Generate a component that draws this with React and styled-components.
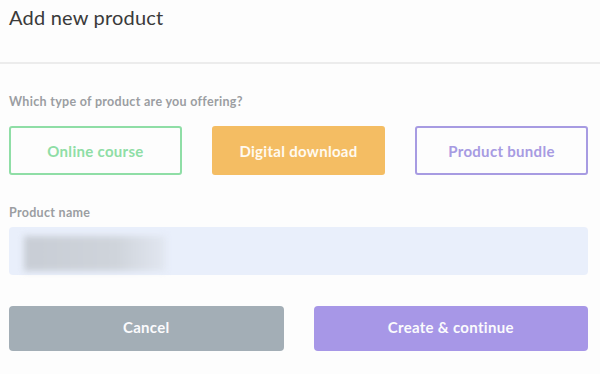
import React from "react";
import styled, { createGlobalStyle } from "styled-components";

const GlobalStyle = createGlobalStyle`
  html, body {
    margin: 0;
    padding: 0;
    background: #fdfdfd;
  }
  body {
    font-family: Lato, "Noto Sans", "Liberation Sans", sans-serif;
  }
`;

const Page = styled.div`
  width: 600px;
  height: 374px;
  overflow: hidden;
  background: #fdfdfd;
`;

const Header = styled.div`
  height: 64px;
  padding: 5px 0 0 9px;
  box-sizing: border-box;
  border-bottom: 2px solid #ececec;
`;

const Title = styled.h1`
  margin: 0;
  font-size: 20px;
  font-weight: 400;
  color: #3a3a3a;
  letter-spacing: 0.2px;
`;

const Body = styled.div`
  padding: 30px 12px 0 9px;
`;

const Label = styled.div`
  font-size: 12.5px;
  line-height: 16px;
  font-weight: 700;
  color: #9b9ea2;
  letter-spacing: 0.3px;
  margin-bottom: ${props => props.gap || 14}px;
`;

const TypeRow = styled.div`
  display: grid;
  grid-template-columns: repeat(3, 1fr);
  gap: 30px;
  margin-bottom: 30px;
`;

const TypeButton = styled.div`
  height: 49px;
  box-sizing: border-box;
  border-radius: 3px;
  border: 2px solid ${props => props.color};
  background: ${props => (props.filled ? props.color : "#fdfdfd")};
  color: ${props => (props.filled ? "#fffaf0" : props.color)};
  display: flex;
  align-items: center;
  justify-content: center;
  font-size: 15px;
  font-weight: 700;
  letter-spacing: 0.3px;
`;

const Input = styled.div`
  height: 48px;
  border-radius: 4px;
  background: #e9effb;
  display: flex;
  align-items: center;
  padding: 0 15px;
  margin-bottom: 31px;
`;

const Blurred = styled.div`
  width: 142px;
  height: 35px;
  background: linear-gradient(90deg, #c8cdd5 0%, #cfd4db 65%, #e2e7f1 100%);
  filter: blur(3px);
  margin-top: 5px;
`;

const Actions = styled.div`
  display: grid;
  grid-template-columns: 1fr 1fr;
  gap: 30px;
`;

const ActionButton = styled.div`
  height: 45px;
  box-sizing: border-box;
  padding-bottom: 3px;
  border-radius: 4px;
  background: ${props => props.bg};
  color: #fbfbfd;
  display: flex;
  align-items: center;
  justify-content: center;
  font-size: 15px;
  font-weight: 700;
  letter-spacing: 0.3px;
`;

const App = () => (
  <Page>
    <GlobalStyle />
    <Header>
      <Title>Add new product</Title>
    </Header>
    <Body>
      <Label gap={16}>Which type of product are you offering?</Label>
      <TypeRow>
        <TypeButton color="#8fdea6">Online course</TypeButton>
        <TypeButton color="#f4bd63" filled>
          Digital download
        </TypeButton>
        <TypeButton color="#a79be2">Product bundle</TypeButton>
      </TypeRow>
      <Label gap={6}>Product name</Label>
      <Input>
        <Blurred />
      </Input>
      <Actions>
        <ActionButton bg="#a3aeb6">Cancel</ActionButton>
        <ActionButton bg="#a797e7">Create &amp; continue</ActionButton>
      </Actions>
    </Body>
  </Page>
);

export default App;
